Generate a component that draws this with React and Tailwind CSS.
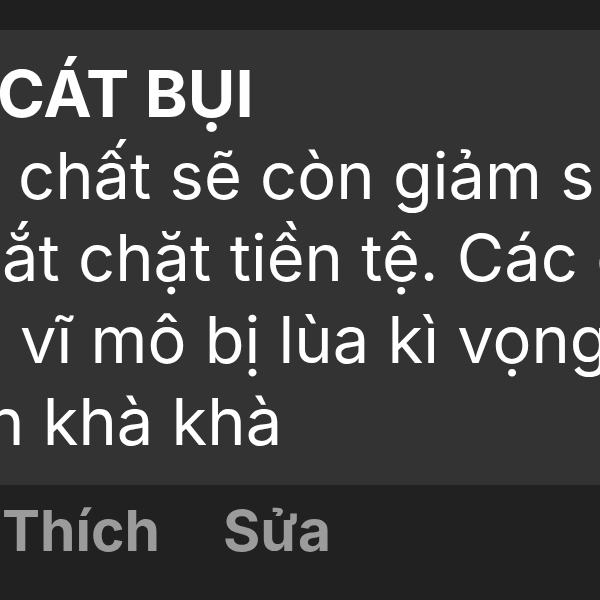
const font = { fontFamily: 'Inter, "Noto Sans", sans-serif' };

export default function App() {
  return (
    <div className="w-[600px] h-[600px] overflow-hidden bg-[#1f1f1f] flex flex-col" style={font}>
      {/* top strip */}
      <div className="h-[30px] shrink-0 bg-[#1f1f1f]" />

      {/* post body */}
      <div className="h-[455px] shrink-0 bg-[#333333] overflow-hidden pt-[23px] text-white">
        <div className="whitespace-nowrap text-[65px] leading-[82px] font-bold -ml-[3px]">CÁT BỤI</div>
        <div className="whitespace-nowrap text-[65px] leading-[82px] ml-[18px]">chất sẽ còn giảm s</div>
        <div className="whitespace-nowrap text-[65px] leading-[82px] ml-[2px]">ắt chặt tiền tệ. Các chuyên</div>
        <div className="whitespace-nowrap text-[65px] leading-[82px] ml-[20px]">vĩ mô bị lùa kì vọng</div>
        <div className="whitespace-nowrap text-[65px] leading-[82px] -ml-[14px]">h khà khà</div>
      </div>

      {/* actions */}
      <div className="flex-1 bg-[#212121] flex items-start gap-[63px] pt-[5px] pl-[2px] text-[#9b9b9b] font-bold text-[57px] leading-[82px]">
        <span>Thích</span>
        <span>Sửa</span>
      </div>
    </div>
  );
}
